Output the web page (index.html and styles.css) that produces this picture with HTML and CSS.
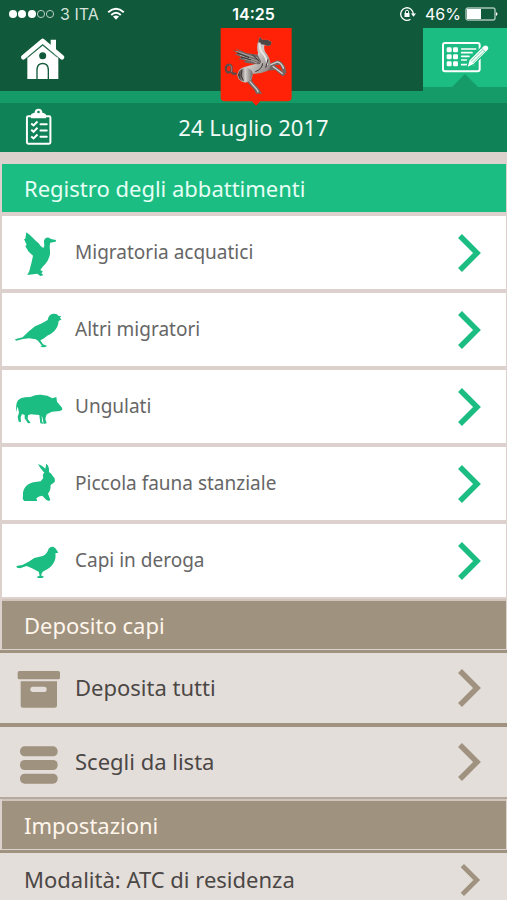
FILE: index.html
```
<!DOCTYPE html>
<html lang="it">
<head>
<meta charset="utf-8">
<meta name="viewport" content="width=device-width, initial-scale=1">
<title>Registro degli abbattimenti</title>
<link rel="stylesheet" href="styles.css">
</head>
<body>
<svg class="defs" aria-hidden="true">
  <symbol id="chevron" viewBox="0 0 24 40"><path d="M3 3L20 20L3 37" fill="none" stroke="currentColor" stroke-width="5.500"/></symbol>
</svg>

<header class="top">
  <div class="status">
    <div class="status-side">
      <svg class="signal" viewBox="0 0 48 12" aria-hidden="true"><g fill="#fff"><circle cx="5" cy="6" r="4"/><circle cx="14" cy="6" r="4"/><circle cx="24" cy="6" r="4"/></g><g fill="none" stroke="#b9cfc5"><circle cx="33" cy="6" r="3.6"/><circle cx="42" cy="6" r="3.6"/></g></svg>
      <span class="carrier">3 ITA</span>
      <svg class="wifi" viewBox="0 0 18 14" aria-hidden="true"><g fill="none" stroke="#fff" stroke-width="2"><path d="M1.2 5.2Q9-1.6 16.800 5.200"/><path d="M4.200 8Q9 3.600 13.800 8"/></g><path d="M6 9.600Q9 7.200 12 9.600L9 12.800Z" fill="#fff"/></svg>
    </div>
    <time class="clock">14:25</time>
    <div class="status-side status-right">
      <svg class="lock" viewBox="0 0 18 16" aria-hidden="true"><path d="M11.500 13.300A6.300 6.300 0 1 1 14.300 8" fill="none" stroke="#fff" stroke-width="1.300"/><path d="M12 7.500h5l-2.500 3.200z" fill="#fff"/><path d="M5.500 7h5v4h-5z" fill="#fff"/><path d="M6.400 7V5.800a1.600 1.600 0 0 1 3.200 0V7" fill="none" stroke="#fff"/></svg>
      <span class="percent">46%</span>
      <svg class="battery" viewBox="0 0 34 14" aria-hidden="true"><rect x="1" y="1" width="29" height="12" rx="2" fill="none" stroke="#a9c5b9" stroke-width="1.400"/><rect x="2" y="2" width="14" height="10" fill="#fff"/><path d="M31 5q3 2 0 4z" fill="#fff"/></svg>
    </div>
  </div>
  <nav class="nav">
    <a class="home" href="#home" aria-label="Home">
      <svg viewBox="60 112 138 132" aria-hidden="true"><g fill="#fff"><path d="M152 120h16v42l-16-14z"/><path d="M82 174L128 137L175 174V238H147V208Q145 189 128 189Q111 189 109 208V238H82Z"/><path d="M113 238V210Q114 194 128 194Q142 194 143 210V238Z"/></g><path d="M70 173L128 124L186 173" fill="none" stroke="#fff" stroke-width="14" stroke-linecap="round" stroke-linejoin="round"/><path d="M84 173L128 137L172 173" fill="none" stroke="#10593b" stroke-width="2"/><circle cx="128" cy="168" r="10.500" fill="#10593b"/></svg>
    </a>
    <div class="crest">
      <svg viewBox="0 0 216 234" role="img" aria-label="Regione Toscana">
        <defs>
          <linearGradient id="coat" x1="0" y1="0" x2="1" y2="1"><stop offset="0" stop-color="#6a6261"/><stop offset=".5" stop-color="#cfcac8"/><stop offset="1" stop-color="#6a6261"/></linearGradient>
          <linearGradient id="haunch" x1="0" y1="0" x2="1" y2="0"><stop offset="0" stop-color="#2b2423"/><stop offset=".5" stop-color="#d6d2cf"/><stop offset="1" stop-color="#6f6866"/></linearGradient>
        </defs>
        <path d="M2 0H215V208Q215 220 203 220H121L108 233L96 220H14Q2 220 2 208Z" fill="#ff2206"/>
        <path d="M47 137Q35 139 34 128Q38 112 28 110Q15 112 18 126Q21 136 29 132" fill="none" stroke="#5d4a48" stroke-width="7" stroke-linecap="round"/>
        <path d="M34 132Q38 112 28 111" fill="none" stroke="#a79c9a" stroke-width="2"/>
        <path d="M138 112L172 97Q188 99 196 120L200 134L190 135L180 110L163 112L185 128L198 139L188 145L166 126L136 128Z" fill="#6f6866"/>
        <path d="M145 113L172 102Q184 104 191 122M158 115L188 137" fill="none" stroke="#d3cfcd" stroke-width="4"/>
        <path d="M96 140Q94 154 98 162L118 184L126 197L108 197L103 186L82 163L78 142Z" fill="#6f6866"/>
        <path d="M89 160L111 185L115 193" fill="none" stroke="#d3cfcd" stroke-width="4"/>
        <path d="M52 142Q54 121 73 117Q88 112 106 108L114 74Q108 54 116 37L120 27L126 35L144 36L154 42L153 50L145 54L134 51Q130 61 136 72Q151 91 151 106Q153 121 142 129Q118 139 98 137Q99 159 76 164Q55 162 52 142Z" fill="url(#coat)"/>
        <path d="M54 141Q57 121 76 120Q96 120 98 137Q96 161 75 162Q56 160 54 141Z" fill="url(#haunch)"/>
        <path d="M120 27L126 35L144 36L154 42L153 50L145 54L133 50L120 48L115 42Z" fill="#4e4645"/>
        <path d="M119 44Q117 60 126 73Q141 89 141 111" fill="none" stroke="#e8e5e3" stroke-width="6"/>
        <path d="M108 107Q84 107 70 101L80 98L54 93L65 88L43 79L56 78L37 66L60 71L47 61L78 75L113 80L124 101Q119 113 108 107Z" fill="#6f6866"/>
        <path d="M49 70L90 84L114 91M60 82L92 92L115 100M71 92L94 98L111 105" fill="none" stroke="#aaa4a1" stroke-width="3"/>
        <path d="M51 74L87 89M63 87L93 96M97 80L116 98M128 106Q126 124 106 131M144 94L137 119M66 125Q59 143 70 158" fill="none" stroke="#393130" stroke-width="3"/>
      </svg>
    </div>
    <a class="register" href="#registro" aria-label="Registro">
      <svg viewBox="186 124 147 94" aria-hidden="true"><rect x="192" y="129" width="110" height="85" rx="6" fill="none" stroke="#fff" stroke-width="6"/><g fill="#fff"><rect x="203" y="142" width="15" height="15" rx="4"/><rect x="222" y="142" width="15" height="15" rx="4"/><rect x="203" y="163" width="15" height="15" rx="4"/><rect x="222" y="163" width="15" height="15" rx="4"/><rect x="203" y="184" width="15" height="15" rx="4"/><rect x="222" y="184" width="15" height="15" rx="4"/></g><path d="M248 147H290M248 158H279M248 169H270M248 180H262M248 194H284" stroke="#fff" stroke-width="5" stroke-linecap="round"/><path d="M263 204L270 180L314 136Q322 131 328 139Q333 146 326 152L284 194Z" fill="#fff" stroke="#1bbd82" stroke-width="4"/><path d="M276 184L310 150M281 189L316 154M306 143L320 157" stroke="#1bbd82" stroke-width="2"/></svg>
      <span class="pointer"></span>
    </a>
  </nav>
</header>

<div class="datebar">
  <svg class="clipboard" viewBox="76 52 80 112" aria-hidden="true"><rect x="81" y="77" width="71" height="83" rx="4" fill="none" stroke="#fff" stroke-width="6"/><path d="M93 83V74Q93 68 104 66Q105 54 116 54Q127 54 128 66Q139 68 139 74V83Z" fill="#fff"/><circle cx="116" cy="64" r="4" fill="#108257"/><g fill="none" stroke="#fff" stroke-width="6"><path d="M94 99L101 105L113 93M94 118L101 124L113 112M94 138L101 144L113 132"/><path d="M122 101H141M122 120H141M122 139H141" stroke-linecap="round"/></g></svg>
  <time class="date" datetime="2017-07-24">24 Luglio 2017</time>
</div>

<main class="content">
  <section class="green">
    <h2>Registro degli abbattimenti</h2>
    <ul class="cards">
      <li><a class="row" href="#acquatici"><svg class="icon" viewBox="6 3 210 219" aria-hidden="true"><path d="M79 52C93 61 104 77 116 85Q122 96 130 99C137 90 129 82 133 74Q138 65 147 68L153 72L168 75L167 80L151 83C147 94 151 104 150 117Q147 138 128 155L121 165L129 170L124 174L130 181L121 183L112 176L82 180L88 168L95 141L99 122L86 110L76 94L80 89L72 73L76 71Z"/></svg><span class="label">Migratoria acquatici</span><svg class="chevron"><use href="#chevron"/></svg></a></li>
      <li><a class="row" href="#migratori"><svg class="icon" viewBox="6 234 210 219" aria-hidden="true"><path d="M45 373L68 367L85 350L105 334L126 325L143 315C146 300 153 296 163 296Q172 296 176 303L184 304L179 309L185 313L176 318C174 338 164 352 144 361L129 372L121 376L129 388L142 393L133 397L121 396L126 392L114 377L107 373L87 370L69 372L48 377Z"/></svg><span class="label">Altri migratori</span><svg class="chevron"><use href="#chevron"/></svg></a></li>
      <li><a class="row" href="#ungulati"><svg class="icon" viewBox="6 -15 210 219" aria-hidden="true"><path d="M50 111C47 99 48 85 54 76Q61 68 75 67L91 66Q107 58 122 59L142 62L157 70L169 66L171 80L186 98L187 104L180 108L156 110L142 117L139 120L136 132L140 145L131 147L128 130L125 122L126 139L130 146L121 145L118 120L92 118L84 121L83 132L92 144L84 145L74 130L74 120L66 117L62 127L63 141L56 140L53 125L57 113L54 98L52 96Z"/></svg><span class="label">Ungulati</span><svg class="chevron"><use href="#chevron"/></svg></a></li>
      <li><a class="row" href="#stanziale"><svg class="icon" viewBox="6 216 210 219" aria-hidden="true"><path d="M114 267Q126 271 136 281L139 266C146 271 148 281 147 291Q155 296 158 303Q167 311 164 321L152 330C152 343 149 350 144 356L151 374L147 378L139 375L127 362Q116 362 109 370L112 378H73Q66 373 69 363C67 341 81 326 100 322L122 319L130 309Q126 298 133 293Q120 280 114 267Z"/></svg><span class="label">Piccola fauna stanziale</span><svg class="chevron"><use href="#chevron"/></svg></a></li>
      <li><a class="row" href="#deroga"><svg class="icon" viewBox="6 447 210 219" aria-hidden="true"><path d="M49 573L67 570L86 560L103 549L128 543Q141 538 146 521Q151 514 159 515Q167 517 170 525L175 533L166 535C170 555 158 574 143 582L128 590L123 601L132 605L127 609H113L111 605L119 602L116 590L96 580L80 573L60 580L51 578Z"/></svg><span class="label">Capi in deroga</span><svg class="chevron"><use href="#chevron"/></svg></a></li>
    </ul>
  </section>

  <section class="taupe">
    <h2>Deposito capi</h2>
    <ul class="actions">
      <li><a class="row" href="#deposita"><svg class="icon" viewBox="6 189 210 210" aria-hidden="true"><rect x="53" y="243" width="127" height="25" rx="5"/><path fill-rule="evenodd" d="M62 274H171V347Q171 353 164 353H69Q62 353 62 347ZM99 290Q91 290 91 298Q91 306 99 306H133Q140 306 140 298Q140 290 133 290Z"/></svg><span class="label">Deposita tutti</span><svg class="chevron"><use href="#chevron"/></svg></a></li>
      <li><a class="row" href="#scegli"><svg class="icon" viewBox="6 -9 210 210" aria-hidden="true"><rect x="60" y="49" width="113" height="30" rx="14"/><rect x="60" y="90" width="113" height="30" rx="14"/><rect x="60" y="131" width="113" height="30" rx="14"/></svg><span class="label">Scegli da lista</span><svg class="chevron"><use href="#chevron"/></svg></a></li>
    </ul>
  </section>

  <section class="taupe settings">
    <h2>Impostazioni</h2>
    <ul class="actions">
      <li><a class="row" href="#modalita"><span class="label">Modalità: ATC di residenza</span><svg class="chevron"><use href="#chevron"/></svg></a></li>
    </ul>
  </section>
</main>
</body>
</html>
```
FILE: styles.css
```
* { box-sizing: border-box; }
html { height: 100%; overflow: hidden; }
body {
  margin: 0;
  height: 100%;
  overflow: hidden;
  background: #dcd1cd;
  font-family: "Noto Sans", sans-serif;
  color: #4b4745;
}
a { color: inherit; text-decoration: none; }
ul { margin: 0; padding: 0; list-style: none; }
svg { display: block; flex: none; }
.defs { position: absolute; width: 0; height: 0; }

/* Header */
.top { background: #10593b; border-bottom: 12px solid #149b68; }
.status {
  display: grid;
  grid-template-columns: 1fr auto 1fr;
  align-items: center;
  height: 28px;
  padding: 0 8px;
  color: #fff;
  font-family: Inter, sans-serif;
  font-size: 16px;
  line-height: 28px;
}
.status-side { display: flex; align-items: center; }
.status-right { justify-content: flex-end; }
.signal { width: 48px; height: 12px; }
.carrier { margin: 0 8px 0 4px; color: #d5e3dc; }
.wifi { width: 18px; height: 14px; }
.clock { font-weight: 600; }
.lock { width: 18px; height: 16px; }
.percent { margin: 0 4px 0 8px; }
.battery { width: 34px; height: 14px; }

.nav {
  position: relative;
  display: flex;
  justify-content: space-between;
  height: 63px;
}
.home { padding: 9px 20px; }
.home svg { width: 46px; height: 44px; }
.crest {
  position: absolute;
  top: 0;
  left: 50%;
  width: 72px;
  margin-left: -34px;
}
.crest svg { width: 72px; height: 78px; }
.register {
  position: relative;
  width: 84px;
  height: 63px;
  padding: 13px 18px;
  background: #1bbd82;
  border-bottom: 4px solid #149b68;
}
.register svg { width: 49px; height: 32px; }
.pointer {
  position: absolute;
  bottom: 0;
  left: 50%;
  margin-left: -13px;
  border: 13px solid transparent;
  border-top-width: 0;
  border-bottom-color: #149b68;
}

.datebar {
  display: grid;
  grid-template-columns: 1fr auto 1fr;
  align-items: center;
  height: 49px;
  padding: 0 25px 2px;
  background: #108257;
  color: #f1faf6;
}
.clipboard { width: 27px; height: 37px; }
.date { font-size: 22px; line-height: 32px; }

/* Lists */
.content { padding: 12px 1px 0 2px; }
h2 {
  margin: 0;
  padding: 0 22px;
  font-size: 22px;
  font-weight: 400;
  line-height: 48px;
}
.green h2 { background: #1bbd82; color: #e6fff5; }
.taupe h2 { background: #9f927f; color: #fff6ec; }
.row { display: flex; align-items: center; }
.icon { width: 70px; fill: currentColor; }
.label { flex: 1; margin-left: 3px; padding-bottom: 2px; white-space: nowrap; }
.chevron { width: 24px; height: 40px; margin-right: 25px; }

.cards { display: grid; gap: 4px; padding: 4px 0; }
.cards .row { height: 73px; background: #fff; color: #1bbd82; font-size: 19px; }
.cards .icon { height: 73px; }
.cards .label { color: #666; }

.taupe { border-top: 2px solid #cfc5bc; margin-top: -2px; }
.actions { margin: 1px -1px 0 -2px; border-bottom: 2px solid #b5aa9d; }
.actions li { border-top: 3px solid #9f927f; }
.actions li + li { border-top-width: 4px; }
.actions .row { height: 70px; padding: 0 1px 0 2px; background: #e4dedb; color: #9f927f; font-size: 22px; }
.actions .icon { height: 70px; }
.actions .label { color: #4b4745; }

.settings { margin-top: 0; }
.settings .row { height: 54px; }
.settings .label { margin-left: 22px; }
.settings .chevron { width: 22px; height: 34px; }
```
